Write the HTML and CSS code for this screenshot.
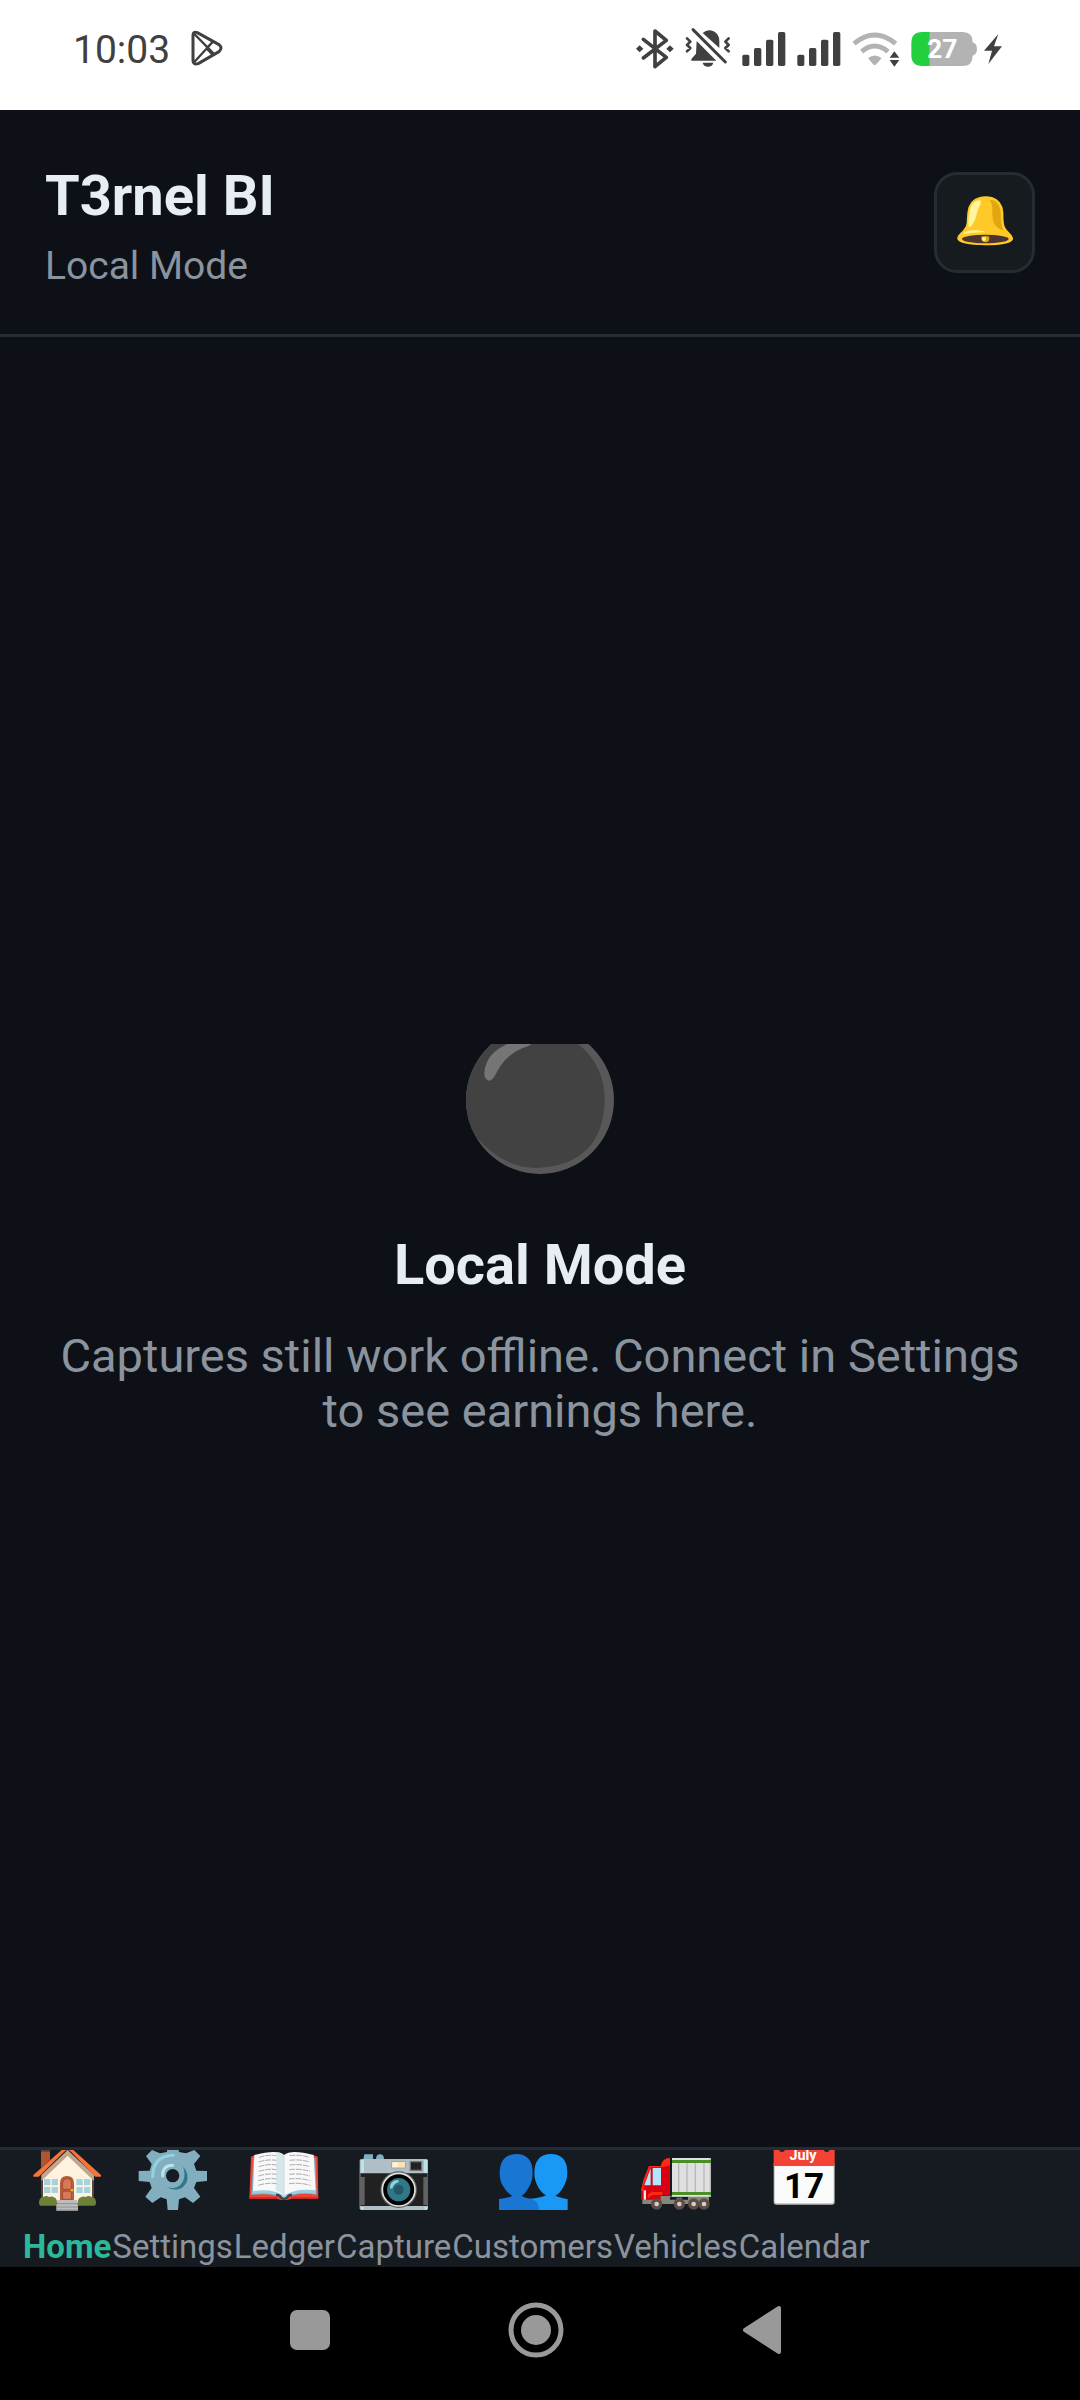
FILE: index.html
```html
<!DOCTYPE html>
<html lang="en">
<head>
<meta charset="utf-8">
<meta name="viewport" content="width=device-width, initial-scale=1">
<title>T3rnel BI</title>
<link rel="stylesheet" href="styles.css">
</head>
<body>
<div class="status-bar">
  <div class="status-left">
    <span class="clock">10:03</span>
    <svg class="play" viewBox="450 90 99 108" fill="none" stroke="#404040" stroke-width="7" stroke-linejoin="round" stroke-linecap="round" aria-hidden="true">
      <path stroke-width="9" d="M459 106Q459 93 472 98L537 134Q549 144 537 155L476 190Q459 196 459 182Z"/>
      <path d="M463 102L521 161M463 186L518 126M500 145L516 128M500 145L517 163"/>
    </svg>
  </div>
  <div class="status-icons">
    <svg width="38" height="43" viewBox="50 48 114 129" aria-hidden="true">
      <path fill="none" stroke="#404040" stroke-width="11" stroke-linejoin="round" stroke-linecap="round" d="M72 85L141 139L107 167V60L141 88L72 141"/>
      <path fill="#404040" d="M50 113l11-10 11 10-11 11zM141 113l11-10 11 10-11 11z"/>
    </svg>
    <svg width="46" height="43" viewBox="194 48 138 129" aria-hidden="true">
      <path fill="#404040" d="M229 90L288 149H213V144L227 128ZM247 66Q262 52 280 61Q297 70 297 90V111ZM247 155H279Q276 167 263 167Q250 167 247 155Z"/>
      <path fill="none" stroke="#404040" stroke-width="9" stroke-linecap="round" stroke-linejoin="round" d="M218 56L315 153"/>
      <path fill="none" stroke="#404040" stroke-width="8" stroke-linecap="round" stroke-linejoin="round" d="M200 82L210 92L200 102L210 111L200 121M325 82L315 92L325 102L315 111L325 121"/>
    </svg>
    <svg width="44" height="43" viewBox="368 48 132 129" fill="#404040" aria-hidden="true">
      <rect x="369" y="131" width="21" height="34" rx="5"/><rect x="404" y="111" width="22" height="54" rx="5"/><rect x="440" y="86" width="22" height="79" rx="5"/><rect x="476" y="63" width="22" height="102" rx="5"/>
    </svg>
    <svg width="44" height="43" viewBox="368 48 132 129" fill="#404040" aria-hidden="true">
      <rect x="369" y="131" width="21" height="34" rx="5"/><rect x="404" y="111" width="22" height="54" rx="5"/><rect x="440" y="86" width="22" height="79" rx="5"/><rect x="476" y="63" width="22" height="102" rx="5"/>
    </svg>
    <svg width="48" height="43" viewBox="702 48 144 129" aria-hidden="true">
      <path fill="none" stroke="#b3b3b3" stroke-width="15" d="M708 98Q770 46 833 98M731 122Q770 88 810 122"/>
      <path fill="#b3b3b3" d="M750 141Q770 126 791 141L775 160Q770 165 765 160Z"/>
      <path fill="#404040" d="M829 121L844 140H815ZM815 147H844L829 167Z"/>
    </svg>
    <div class="battery">
      <svg width="66" height="43" viewBox="875 48 198 129" role="img" aria-label="Battery 27 percent">
        <path fill="#b3b3b3" d="M930 63H1030Q1060 63 1060 94Q1073 98 1073 114Q1073 130 1060 134Q1060 165 1030 165H930Z"/>
        <path fill="#22cf3c" d="M931 63H909Q876 63 876 96V132Q876 165 909 165H931Z"/>
        <text class="battery-text" x="969" y="141" text-anchor="middle">27</text>
      </svg>
      <svg width="18" height="43" viewBox="1093 48 54 129" aria-hidden="true">
        <path fill="#404040" d="M1136 69L1093 119H1117L1106 159L1147 106H1123Z"/>
      </svg>
    </div>
  </div>
</div>

<header class="header">
  <div class="heading">
    <h1 class="title">T3rnel BI</h1>
    <p class="subtitle">Local Mode</p>
  </div>
  <button class="bell-button" type="button" aria-label="Notifications">
    <svg width="56" height="50" viewBox="170 140 168 150" aria-hidden="true">
      <path fill="#ffca28" d="M238 143Q255 139 275 143Q307 153 309 189Q309 226 314 234Q318 242 330 253Q339 262 338 270Q331 288 254 288Q178 287 171 270Q169 261 180 251Q197 236 199 221Q200 202 201 190Q205 151 238 143Z"/>
      <path fill="#e2a610" d="M267 151Q296 151 301 188Q301 229 309 243Q292 240 282 224Q275 211 276 184Q276 159 267 151Z"/>
      <path fill="#fff59d" d="M241 153Q213 152 207 190Q202 223 206 234Q217 232 227 202Q231 180 241 163ZM188 255Q195 241 231 243Q250 245 255 249Q217 248 188 255Z"/>
      <ellipse cx="255" cy="269" rx="70" ry="13" fill="#4e342e"/>
      <path fill="#e2a610" d="M243 262Q255 258 267 262Q269 279 255 279Q241 277 243 262Z"/><circle cx="251" cy="269" r="6" fill="#fff59d"/>
    </svg>
  </button>
</header>

<main class="main">
  <svg class="orb" width="148" height="130" viewBox="78 72 444 390" aria-hidden="true">
    <circle cx="300" cy="240" r="222" fill="#585858"/>
    <path fill="#424242" d="M78 240A222 222 0 0 1 157 72H415Q494 138 494 240Q490 434 290 444Q189 444 108 350Q78 304 78 240Z"/>
    <path fill="#757575" d="M202 72H274Q269 78 248 84Q193 106 166 165Q155 184 147 182Q132 179 133 157Q138 100 202 72Z"/>
  </svg>
  <h2 class="empty-title">Local Mode</h2>
  <p class="empty-text">Captures still work offline. Connect in Settings to see earnings here.</p>
</main>

<nav class="tabs" aria-label="Main">
  <a class="tab tab-active" href="#home" aria-current="page">
    <svg class="tab-icon" viewBox="93 60 216 192" aria-hidden="true">
      <path fill="#ac5731" d="M123 60H150V90L123 114Z"/><path fill="#5d4037" d="M123 60H150V65H123ZM123 145H129V210H123ZM276 145H282V210H276Z"/>
      <path fill="#fff3e0" d="M129 140L203 72L276 140V220H129Z"/>
      <path fill="#bfa68c" d="M203 60L282 135V153L203 77L124 153V135Z"/>
      <path fill="#f4743b" d="M185 60H220L303 135V140H286L213 65Q203 55 193 65L116 140H100V135Z"/>
      <path fill="#b75b38" d="M180 210V160Q180 138 201 138Q222 138 222 160V210Z"/><path fill="#d5795a" stroke="#994326" stroke-width="2" d="M188 178V158Q189 146 201 146Q214 146 214 158V178ZM188 184H214V208H188Z"/><rect x="212" y="177" width="8" height="7" fill="#ffb300"/>
      <path fill="#a6d4de" d="M132 147H151V166H132ZM155 147H174V166H155ZM132 171H151V189H132ZM155 171H174V189H155ZM229 147H248V166H229ZM252 147H271V166H252ZM229 171H248V189H229ZM252 171H271V189H252Z"/>
      <path fill="#6d8037" d="M117 222Q116 201 130 201Q139 195 147 201Q156 197 162 202Q172 204 172 227H121ZM288 222Q289 201 275 201Q265 195 257 201Q248 197 243 202Q232 204 232 227H284Z"/>
      <path fill="#bdbdbd" d="M171 210H232V224H234V242H169V224H171Z"/><path stroke="#8e8e8e" stroke-width="3" d="M171 221H232M169 231H234M169 240H234"/>
    </svg>
    <span>Home</span>
  </a>
  <a class="tab" href="#settings">
    <svg class="tab-icon" viewBox="413 60 216 192" aria-hidden="true">
      <path fill="#82aec0" fill-rule="evenodd" d="M458 60L440 78L457 102L451 122L418 123V153L451 156L457 174L438 200L459 219L484 202L502 208L505 240H536L539 208L557 202L581 219L603 200L584 174L591 156L623 153V123L591 122L584 102L603 78L585 60L560 70L539 66L538 60H503V66L482 70ZM520 117A20 20 0 1 1 520 157A20 20 0 1 1 520 117Z"/>
      <path fill="none" stroke="#94d1e0" stroke-width="9" stroke-linecap="round" d="M460 140Q461 78 522 76"/>
      <path fill="none" stroke="#b9e4ea" stroke-width="9" stroke-linecap="round" d="M490 138Q489 106 520 106"/>
      <path fill="#2f7889" d="M551 110Q571 130 562 157Q543 193 500 170Q536 183 551 154Q560 132 551 110Z"/>
    </svg>
    <span>Settings</span>
  </a>
  <a class="tab" href="#ledger">
    <svg class="tab-icon" viewBox="59 60 216 192" aria-hidden="true">
      <path fill="#f44336" d="M68 80L78 76H256L268 80L270 207H188Q167 213 146 207H63Z"/><path fill="#c62828" d="M63 202H145L149 207H63ZM188 202H270V207H188Z"/>
      <path fill="#82aec0" d="M75 84H261L265 194Q208 185 167 205Q127 187 69 195Z"/>
      <path fill="#94d1e0" d="M73 180Q130 170 167 192Q207 170 262 180V192Q206 182 167 204Q132 185 71 192Z"/>
      <path fill="#f8f8f8" d="M78 75Q148 57 167 75Q188 57 256 75L262 181Q202 174 167 197Q133 174 74 183Z"/>
      <path fill="#d5e7eb" d="M145 67Q160 67 167 76V197Q157 185 142 181Z"/><path stroke="#b8ced4" stroke-width="2" d="M167 77V196"/>
      <path fill="none" stroke="#aaa" stroke-width="3" stroke-dasharray="17 3" d="M92 82Q120 73 144 77M91 96Q120 87 144 91M91 110Q120 101 144 105M91 124Q120 115 144 119M90 138Q120 129 144 133M90 152Q120 143 144 147M90 166Q120 157 144 161M184 77Q215 73 243 82M184 91Q215 87 244 96M184 105Q215 101 245 110M183 119Q215 115 245 124M183 133Q215 129 245 138M182 147Q215 143 246 152M182 161Q215 157 246 166"/>
      <path fill="none" stroke="#424242" stroke-width="7" d="M143 195Q155 194 158 203Q167 210 176 203Q180 194 191 195"/>
    </svg>
    <span>Ledger</span>
  </a>
  <a class="tab" href="#capture">
    <svg class="tab-icon" viewBox="389 60 216 192" aria-hidden="true">
      <path fill="#82aec0" d="M405 88L408 73H434V88ZM443 87Q443 73 455 73Q467 73 467 87Z"/>
      <rect x="394" y="87" width="205" height="153" rx="5" fill="#b0bec5"/><path fill="#212121" d="M396 130H598V228H396Z"/>
      <path fill="#616161" d="M395 141H409V225H395ZM585 141H599V225H585Z"/><path fill="#b9e4ea" d="M398 90H407V128H398ZM587 90H596V128H587ZM398 230H405V239H398ZM589 230H596V239H589Z"/>
      <rect x="490" y="95" width="41" height="19" fill="#ffe0b2" stroke="#8d9ba1" stroke-width="2"/><path fill="#fff3e0" d="M493 98H509V111H493Z"/>
      <rect x="546" y="95" width="34" height="26" fill="#212121" stroke="#757575" stroke-width="4"/>
      <circle cx="511" cy="179" r="55" fill="#616161"/><circle cx="511" cy="179" r="49" fill="#000" stroke="#e0e0e0" stroke-width="5"/>
      <circle cx="511" cy="179" r="35" fill="#2f7889"/><circle cx="511" cy="179" r="15" fill="#255764"/><path fill="#94d1e0" d="M485 173Q485 153 506 150Q514 151 510 157Q497 161 493 173Q487 179 485 173Z"/>
    </svg>
    <span>Capture</span>
  </a>
  <a class="tab" href="#customers">
    <svg class="tab-icon" viewBox="142 60 216 192" aria-hidden="true">
      <path fill="#1998f5" d="M304 72Q353 73 353 128Q353 151 341 171Q329 193 317 197Q324 201 354 208V240H235V207Q281 203 289 196Q276 189 265 171Q254 150 254 130Q254 73 304 72Z"/>
      <path fill="#1976d2" d="M200 72Q249 73 249 128Q249 151 238 171Q227 191 216 198Q222 202 245 207Q268 214 268 240H148V207Q177 204 188 197Q173 191 162 171Q150 156 150 130Q150 73 200 72Z"/>
    </svg>
    <span>Customers</span>
  </a>
  <a class="tab" href="#vehicles">
    <svg class="tab-icon" viewBox="570 60 216 192" aria-hidden="true">
      <path fill="#82877a" d="M577 197H777V222H577Z"/><path fill="#151c20" d="M660 200H714V209H696V203H680V209H660Z"/>
      <path fill="#d90012" d="M660 84V195H632V209H573V180L597 108H633Q637 84 660 84Z"/>
      <path fill="#ff2a10" d="M660 84V105Q652 109 633 112H600L581 166V182H573L580 150L597 108H633Q637 84 660 84ZM592 201Q594 186 612 186H637V195H610Q600 196 598 203Z"/>
      <path fill="#b3e5fc" d="M602 114V166H583ZM608 114H633V166H608Z"/><path fill="#eee" d="M581 181H588V209H581Z"/>
      <path fill="#e0e0e0" d="M666 84H783V200H666Z"/><path stroke="#b8b8b8" stroke-width="4" d="M686 99V186M711 99V186M736 99V186M762 99V186M781 84V200"/><path fill="#4a8f25" d="M666 90H783V99H666ZM666 186H783V195H666Z"/>
      <g fill="#d7ccc8" stroke="#5d4d49" stroke-width="10"><circle cx="620" cy="222" r="12"/><circle cx="688" cy="222" r="12"/><circle cx="731" cy="222" r="12"/><circle cx="762" cy="222" r="12"/></g>
    </svg>
    <span>Vehicles</span>
  </a>
  <a class="tab" href="#calendar">
    <svg class="tab-icon" viewBox="445 60 216 192" aria-hidden="true">
      <path fill="#bdbdbd" d="M462 100H645V216Q645 224 637 224H470Q462 224 462 216Z"/><path fill="#fafafa" d="M465 100H642V213Q642 220 635 220H472Q465 220 465 213Z"/>
      <path fill="#f44336" d="M462 60H645V108H462Z"/><path fill="#212121" d="M478 60H496Q494 66 487 66Q480 66 478 60ZM612 60H630Q628 66 621 66Q614 66 612 60Z"/>
      <text class="cal-month" x="550" y="91" text-anchor="middle">July</text>
      <text class="cal-day" x="553" y="203" text-anchor="middle">17</text>
    </svg>
    <span>Calendar</span>
  </a>
</nav>

<div class="system-bar">
  <button class="system-button" type="button" aria-label="Recent apps"><svg width="56" height="56" viewBox="0 0 56 56"><rect x="8" y="8" width="40" height="40" rx="7" fill="#999"/></svg></button>
  <button class="system-button" type="button" aria-label="Home screen"><svg width="56" height="56" viewBox="0 0 56 56"><circle cx="28" cy="28" r="25" fill="none" stroke="#999" stroke-width="5"/><circle cx="28" cy="28" r="15" fill="#999"/></svg></button>
  <button class="system-button" type="button" aria-label="Back"><svg width="56" height="56" viewBox="0 0 56 56"><path d="M11 28L45 6V50Z" fill="#999" stroke="#999" stroke-width="4" stroke-linejoin="round"/></svg></button>
</div>
</body>
</html>
```
FILE: styles.css
```css
* {
  box-sizing: border-box;
}

body {
  margin: 0;
  min-height: 100vh;
  display: flex;
  flex-direction: column;
  background: #0d1117;
  color: #e6edf3;
  font-family: Roboto, "Liberation Sans", sans-serif;
}

h1, h2, p {
  margin: 0;
}

svg {
  display: block;
  flex: none;
}

button {
  padding: 0;
  border: 0;
  background: none;
}

.status-bar {
  display: flex;
  justify-content: space-between;
  align-items: center;
  height: 110px;
  padding: 0 78px 14px 73px;
  background: #fff;
  color: #404040;
}

.status-left {
  display: flex;
  align-items: center;
  gap: 20px;
}

.clock {
  padding-top: 3px;
  font-size: 39px;
  line-height: 46px;
}

.play {
  width: 33px;
  height: 36px;
}

.status-icons {
  display: flex;
  align-items: center;
  gap: 11px;
}

.battery {
  display: flex;
  gap: 7px;
}

.battery-text {
  fill: #fff;
  font-size: 80px;
  font-weight: 700;
}

.header {
  display: flex;
  justify-content: space-between;
  align-items: center;
  padding: 45px;
  border-bottom: 3px solid #262c34;
}

.heading {
  display: flex;
  flex-direction: column;
  gap: 14px;
  padding-top: 8px;
}

.title,
.empty-title {
  font-size: 56px;
  line-height: 66px;
  font-weight: 700;
}

.subtitle {
  font-size: 39px;
  line-height: 46px;
  color: #8b949e;
}

.bell-button {
  display: flex;
  align-items: center;
  justify-content: center;
  width: 101px;
  height: 101px;
  padding-bottom: 2px;
  border: 3px solid #262c34;
  border-radius: 23px;
  background: #161b20;
}

.main {
  flex: 1;
  display: flex;
  flex-direction: column;
  align-items: center;
  justify-content: center;
  padding: 0 45px 2px;
  text-align: center;
}

.orb {
  margin-bottom: 58px;
}

.empty-text {
  margin-top: 30px;
  font-size: 47px;
  line-height: 55px;
  color: #8b949e;
}

.tabs {
  display: flex;
  gap: 1px;
  padding: 0 23px;
  border-top: 3px solid #262c34;
  background: #161b21;
}

.tab {
  display: flex;
  flex-direction: column;
  align-items: center;
  gap: 13px;
  font-size: 33px;
  line-height: 40px;
  color: #8b949e;
  text-decoration: none;
}

.tab-active {
  color: #2bb99b;
  font-weight: 700;
}

.tab-icon {
  width: 72px;
  height: 64px;
}

.cal-month {
  fill: #fff;
  font-size: 43px;
  font-weight: 700;
}

.cal-day {
  fill: #000;
  font-size: 105px;
  font-weight: 700;
}

.system-bar {
  display: flex;
  justify-content: center;
  align-items: center;
  gap: 170px;
  height: 133px;
  padding: 0 9px 8px 0;
  background: #000;
}

.system-button {
  width: 56px;
  height: 56px;
}
```
